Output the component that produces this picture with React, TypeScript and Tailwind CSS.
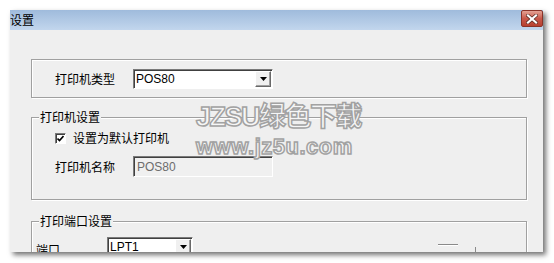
import React from "react";

const font = { fontFamily: '"Noto Sans CJK SC", "Liberation Sans", sans-serif' };

function DropBtn() {
  return (
    <div className="w-[16px] h-[16px] bg-[#f0f0f0] border border-t-white border-l-white border-r-[#696969] border-b-[#696969] shadow-[inset_-1px_-1px_0_#a0a0a0] flex items-center justify-center">
      <svg width="7" height="4" viewBox="0 0 7 4">
        <path d="M0 0 H7 L3.5 4 Z" fill="#000" />
      </svg>
    </div>
  );
}

function Combo({ value, w }: { value: string; w: string }) {
  return (
    <div
      className={`${w} h-[20px] bg-white border border-t-[#7a7a7a] border-l-[#7a7a7a] border-r-white border-b-white shadow-[inset_1px_1px_0_#404040] flex items-center justify-between pl-[2px] pr-[1px]`}
    >
      <span className="text-[12px] text-black leading-none" style={{ fontFamily: '"Liberation Sans", sans-serif' }}>
        {value}
      </span>
      <DropBtn />
    </div>
  );
}

function Group({ title, h, children, cls }: { title?: string; h: string; children: React.ReactNode; cls?: string }) {
  return (
    <div
      className={`relative w-[496px] ${h} border border-[#a0a0a0] shadow-[inset_1px_1px_0_#ffffff,1px_1px_0_#ffffff] ${cls ?? ""}`}
    >
      {title && (
        <span className="absolute left-[7px] top-[-9px] px-[1px] bg-[#efefef] text-[12px] leading-[16px] text-black">
          {title}
        </span>
      )}
      {children}
    </div>
  );
}

export default function App() {
  return (
    <div className="relative w-[554px] h-[263px] bg-white overflow-hidden" style={font}>
      <div className="ml-[10px] mt-[10px] w-[533px] h-[242px] bg-[#efefef] overflow-hidden shadow-[3px_3px_5px_rgba(0,0,0,0.55)] flex flex-col">
        {/* title bar */}
        <div className="h-[20px] bg-gradient-to-b from-[#9fbbdc] to-[#c2d6ed] flex items-center justify-between shrink-0">
          <span className="text-[12px] text-black leading-none">设置</span>
          <div className="w-[22px] h-[17px] self-start rounded-[2px] border border-[#8a3328] bg-gradient-to-b from-[#e3a295] via-[#c8584a] to-[#b7402f] flex items-center justify-center">
            <svg width="12" height="10" viewBox="0 0 12 10">
              <path d="M2 1.5 L10 8.5 M10 1.5 L2 8.5" stroke="#5a2a22" strokeWidth="3.6" strokeLinecap="square" />
              <path d="M2 1.5 L10 8.5 M10 1.5 L2 8.5" stroke="#ffffff" strokeWidth="2.2" strokeLinecap="square" />
            </svg>
          </div>
        </div>

        {/* body */}
        <div className="pl-[21px] pt-[29px] flex flex-col">
          <Group h="h-[39px]">
            <div className="h-full flex items-center pl-[23px]">
              <span className="w-[78px] text-[12px] text-black">打印机类型</span>
              <Combo value="POS80" w="w-[140px]" />
            </div>
          </Group>

          <Group title="打印机设置" h="h-[83px]" cls="mt-[19px]">
            <div className="flex flex-col pl-[23px] pt-[10px]">
              <div className="h-[20px] flex items-center">
                <div className="w-[11px] h-[11px] bg-white border border-t-[#7a7a7a] border-l-[#7a7a7a] border-r-white border-b-white shadow-[inset_1px_1px_0_#404040] flex items-center justify-center">
                  <svg width="7" height="7" viewBox="0 0 7 7">
                    <path d="M0.5 3.5 L2.5 5.5 L6.5 1" stroke="#000" strokeWidth="1.6" fill="none" />
                  </svg>
                </div>
                <span className="ml-[7px] text-[12px] text-black">设置为默认打印机</span>
              </div>
              <div className="mt-[8px] h-[21px] flex items-center">
                <span className="w-[78px] text-[12px] text-black">打印机名称</span>
                <div className="w-[140px] h-[21px] bg-[#f0f0f0] border border-t-[#7a7a7a] border-l-[#7a7a7a] border-r-white border-b-white shadow-[inset_1px_1px_0_#404040] flex items-center pl-[3px]">
                  <span className="text-[12px] text-[#6d6d6d] leading-none" style={{ fontFamily: '"Liberation Sans", sans-serif' }}>
                    POS80
                  </span>
                </div>
              </div>
            </div>
          </Group>

          <Group title="打印端口设置" h="h-[60px]" cls="mt-[21px]">
            <div className="flex pl-[4px] pt-[15px]">
              <span className="w-[71px] text-[12px] text-black leading-[26px]">端口</span>
              <Combo value="LPT1" w="w-[86px]" />
            </div>
            <div className="absolute left-[406px] top-[22px] w-[20px] h-[1px] bg-[#8a8a8a] shadow-[0_1px_0_#ffffff]" />
            <div className="absolute left-[443px] top-[25px] w-[1px] h-[6px] bg-[#8a8a8a]" />
          </Group>
        </div>
      </div>

      {/* watermark */}
      <div className="absolute left-[196px] top-[101px] pointer-events-none select-none">
        <div
          className="text-[27px] font-bold leading-[32px] text-[#f6f6f6] [-webkit-text-stroke:1.5px_#a2a2a2] tracking-[-1.5px]"
          style={{ fontFamily: '"Liberation Sans", "Noto Sans CJK SC", sans-serif' }}
        >
          JZSU绿色下载
        </div>
        <div
          className="text-[22px] font-bold leading-[22px] text-[#f6f6f6] [-webkit-text-stroke:1.5px_#a2a2a2] tracking-[0.5px] mt-[3px]"
          style={{ fontFamily: '"Liberation Sans", sans-serif' }}
        >
          www.jz5u.com
        </div>
      </div>
    </div>
  );
}
